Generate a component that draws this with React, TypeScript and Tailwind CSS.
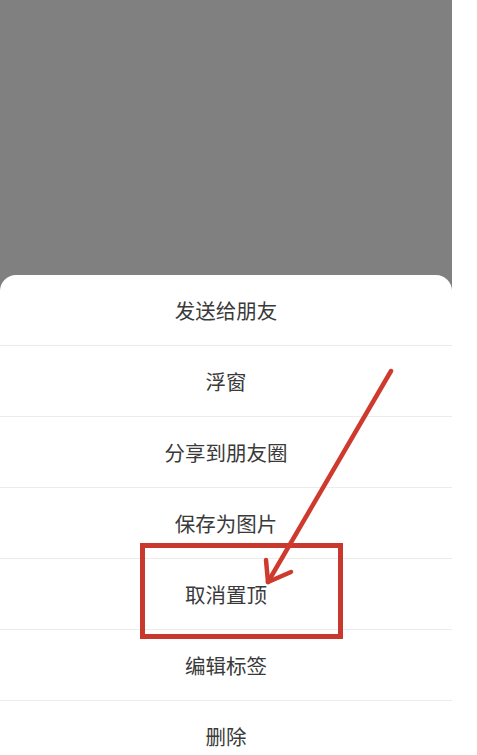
import React from "react";

const items = ["发送给朋友", "浮窗", "分享到朋友圈", "保存为图片", "取消置顶", "编辑标签", "删除"];

export default function App() {
  return (
    <div
      className="relative w-[477px] h-[755px] overflow-hidden bg-white"
      style={{ fontFamily: '"Noto Sans CJK SC", "Noto Sans", sans-serif' }}
    >
      <div className="flex flex-col w-[452px] h-full bg-[#808080]">
        <div className="h-[275px] shrink-0" />
        <div className="flex-1 flex flex-col bg-white rounded-t-2xl">
          {items.map((t, i) => (
            <div
              key={t}
              className={
                i < items.length - 1
                  ? "h-[71px] shrink-0 flex items-center justify-center border-b border-[#ececec] text-[20.5px] text-[#3a3a3a]"
                  : "h-[71px] shrink-0 flex items-center justify-center text-[20.5px] text-[#3a3a3a]"
              }
            >
              {t}
            </div>
          ))}
        </div>
      </div>

      {/* red highlight box */}
      <div className="absolute left-[140px] top-[543px] w-[203px] h-[96px] border-[5px] border-[#c9382c]" />

      {/* arrow */}
      <svg
        className="absolute left-0 top-0 pointer-events-none"
        width="477"
        height="755"
        viewBox="0 0 477 755"
      >
        <g stroke="#cf3a2e" strokeWidth="4.5" strokeLinecap="round" strokeLinejoin="round" fill="none">
          <line x1="391" y1="371" x2="268" y2="582" />
          <polyline points="266,560 268,582 291,572" />
        </g>
      </svg>
    </div>
  );
}
